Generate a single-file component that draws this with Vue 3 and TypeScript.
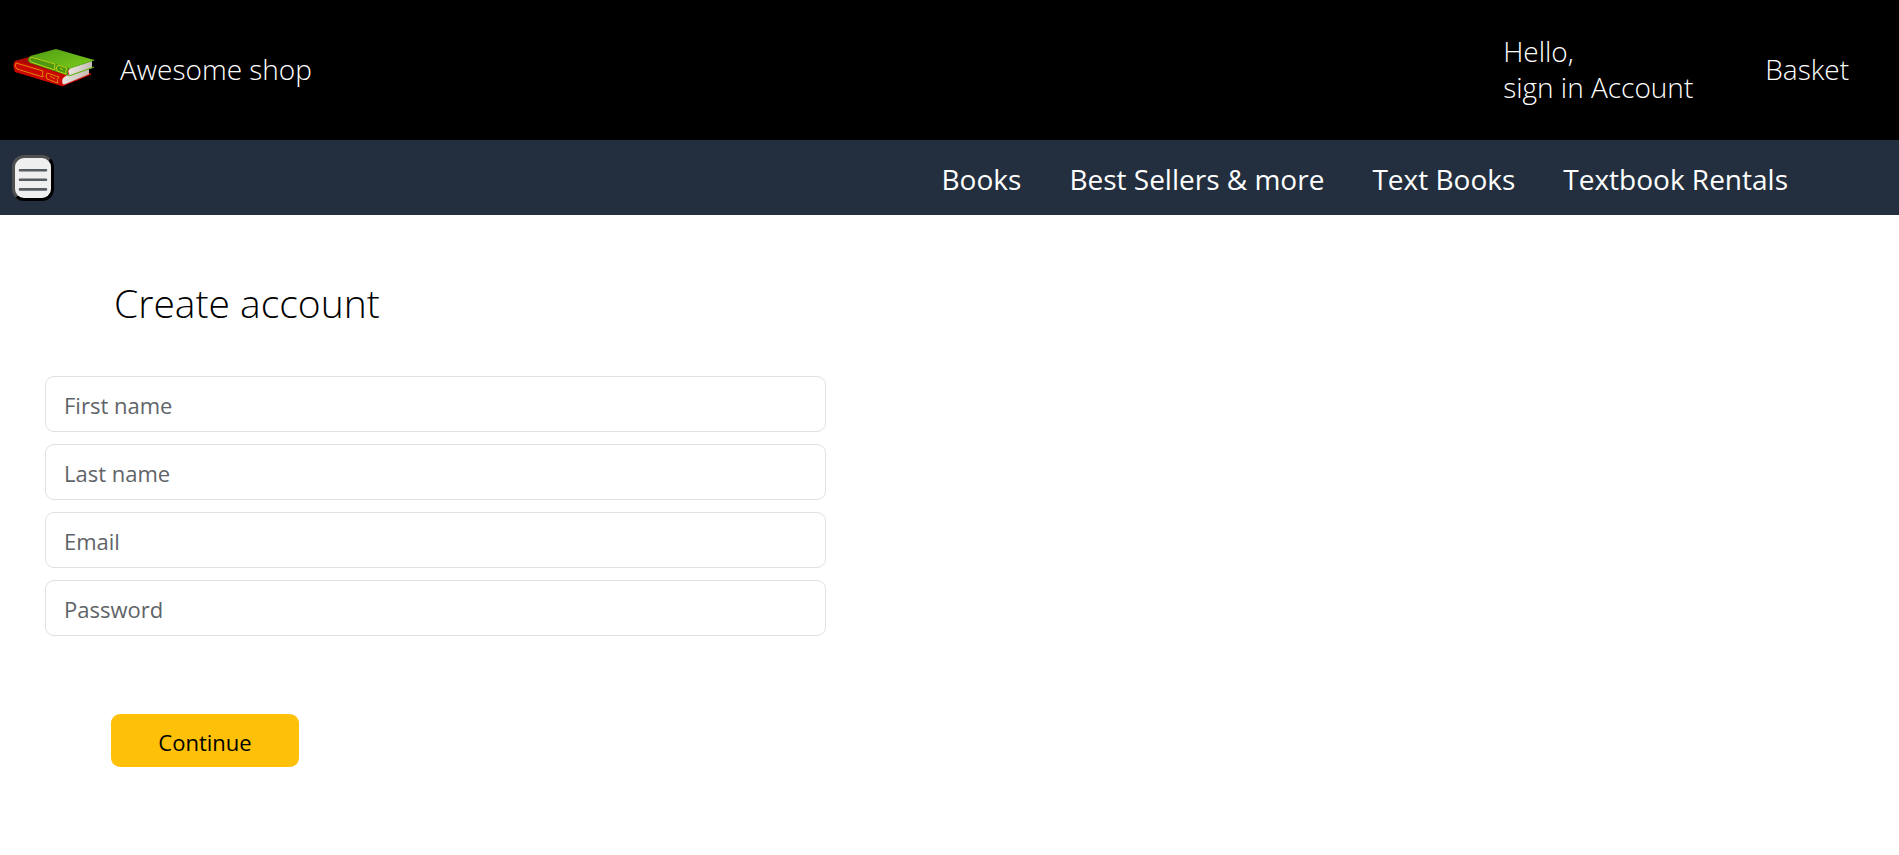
<script setup lang="ts">
import { reactive } from 'vue'

type FieldKey = 'firstName' | 'lastName' | 'email' | 'password'

interface Field {
  key: FieldKey
  label: string
  type: string
}

const links: string[] = ['Books', 'Best Sellers & more', 'Text Books', 'Textbook Rentals']

const fields: Field[] = [
  { key: 'firstName', label: 'First name', type: 'text' },
  { key: 'lastName', label: 'Last name', type: 'text' },
  { key: 'email', label: 'Email', type: 'email' },
  { key: 'password', label: 'Password', type: 'password' },
]

const form = reactive<Record<FieldKey, string>>({
  firstName: '',
  lastName: '',
  email: '',
  password: '',
})
</script>

<template>
  <div class="page">
    <header class="top">
      <a class="brand" href="#">
        <svg class="logo" viewBox="0 0 84 40" aria-hidden="true">
          <defs>
            <linearGradient id="green" x1="0" y1="0" x2="1" y2="1">
              <stop offset="0" stop-color="#4f9e14" />
              <stop offset="1" stop-color="#7ccb1c" />
            </linearGradient>
            <linearGradient id="paper" x1="0" y1="0" x2="1" y2="0">
              <stop offset="0" stop-color="#e9e4e0" />
              <stop offset="1" stop-color="#c4bab2" />
            </linearGradient>
          </defs>
          <path d="M3 12 L36 3 L79 25 L50 37 L3 23 Q0 17 3 12Z" fill="#cc0803" />
          <path d="M3 12 L36 3 L60 13 L50 25Z" fill="#a90805" />
          <path d="M3 12 L52 26 Q47 31 50 37 L4 23 Q0 17 3 12Z" fill="#c90602" />
          <path d="M77 20 L77 26 L52 36 Q47 31 55 26Z" fill="url(#paper)" />
          <path d="M50 37 L79 25" stroke="#d00a05" stroke-width="1.2" fill="none" />
          <path d="M4 14 L31 22 Q30 25 31 28 L5 20 Q2 17 4 14Z M35 24 L47 28 Q44 30 46 34 L35 30 Q33 27 35 24Z M38 27 L43 30" fill="none" stroke="#e58208" stroke-width="1" />
          <path d="M18 7 L44 0 L82 11 L57 20Z" fill="url(#green)" />
          <path d="M18 7 L58 19 Q54 22 57 27 L18 14 Q14 11 18 7Z" fill="#4c9810" />
          <path d="M80 12 L80 19 L58 26 Q54 22 59 19Z" fill="url(#paper)" />
          <path d="M57 27 L82 18 M58 19 L82 11" stroke="#62b516" stroke-width="1.1" fill="none" />
          <path d="M19 8 L43 15 Q42 18 43 21 L19 13 Q16 11 19 8Z M46 16 L55 19 Q53 22 54 25 L45 22 Q43 19 46 16Z M48 19 L51 21" fill="none" stroke="#b9d016" stroke-width="1" />
        </svg>
        <span>Awesome shop</span>
      </a>
      <nav class="account" aria-label="Account">
        <a href="#">Hello,<br />sign in Account</a>
        <a href="#">Basket</a>
      </nav>
    </header>

    <div class="bar">
      <button class="menu" type="button" aria-label="Menu">
        <svg viewBox="0 0 36 40" aria-hidden="true">
          <path d="M5 12.3H31M5 21.8H31M5 31.4H31" fill="none" stroke="#565b60" stroke-width="2.6" stroke-linecap="round" />
        </svg>
      </button>
      <nav class="links" aria-label="Categories">
        <a v-for="link in links" :key="link" href="#">{{ link }}</a>
      </nav>
    </div>

    <main class="main">
      <h1>Create account</h1>
      <form @submit.prevent>
        <div class="fields">
          <input
            v-for="field in fields"
            :key="field.key"
            v-model="form[field.key]"
            :type="field.type"
            :placeholder="field.label"
            :aria-label="field.label"
          />
        </div>
        <button class="submit" type="submit">Continue</button>
      </form>
    </main>
  </div>
</template>

<style>
body {
  margin: 0;
  background: #fff;
}
</style>

<style scoped>
.page,
.page input,
.page button {
  font-family: 'Open Sans', 'Noto Sans', sans-serif;
}
.page a {
  color: #fff;
  text-decoration: none;
}
.page *,
.page {
  box-sizing: border-box;
}
.top {
  display: flex;
  align-items: center;
  justify-content: space-between;
  min-height: 140px;
  padding: 0 50px 2px 12px;
  background: #000;
  font-size: 28px;
  line-height: 36px;
  font-weight: 300;
}
.brand {
  display: flex;
  align-items: center;
  gap: 24px;
}
.logo {
  width: 84px;
  height: 40px;
}
.account {
  display: flex;
  align-items: center;
  gap: 72px;
}
.bar {
  display: flex;
  align-items: center;
  justify-content: space-between;
  min-height: 75px;
  padding: 0 111px 0 12px;
  background: #232f3e;
}
.menu {
  width: 42px;
  height: 46px;
  padding: 0;
  border: 3px solid;
  border-color: #505050 #000 #000 #505050;
  border-radius: 12px;
  background: #efefef;
}
.menu svg {
  display: block;
  width: 36px;
  height: 40px;
}
.links {
  display: flex;
  gap: 48px;
  padding-top: 2px;
  font-size: 28px;
  line-height: 36px;
}
.main {
  padding: 60px 45px 48px;
}
h1 {
  margin: 0 0 45px;
  padding-left: 69px;
  font-size: 39px;
  line-height: 56px;
  font-weight: 300;
  color: #000;
}
.fields {
  display: flex;
  flex-direction: column;
  gap: 12px;
  width: 43.2%;
}
.fields input {
  width: 100%;
  height: 56px;
  padding: 2px 18px 0;
  border: 1px solid #dee2e6;
  border-radius: 9px;
  background: #fff;
  font-size: 22px;
  color: #212529;
}
.fields input::placeholder {
  color: #5f6468;
  opacity: 1;
}
.submit {
  min-width: 188px;
  height: 53px;
  margin: 78px 0 0 66px;
  padding: 2px 0 0;
  border: 0;
  border-radius: 9px;
  background: #ffc107;
  font-size: 22px;
  color: #000;
}
</style>
